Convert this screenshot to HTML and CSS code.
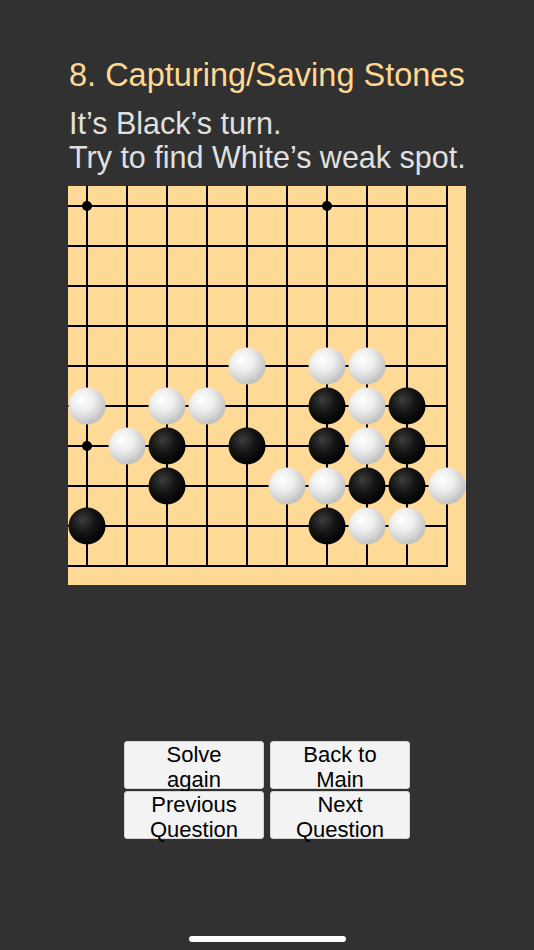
FILE: index.html
```html
<!DOCTYPE html>
<html lang="en">
<head>
<meta charset="utf-8">
<title>Capturing/Saving Stones</title>
<link rel="stylesheet" href="styles.css">
</head>
<body>
<div class="screen">
  <div class="content">
    <h1 class="title">8. Capturing/Saving Stones</h1>
    <p class="prompt">It’s Black’s turn.<br>Try to find White’s weak spot.</p>
    <svg class="board" width="398" height="399" viewBox="0 0 398 399" xmlns="http://www.w3.org/2000/svg">
      <defs>
        <radialGradient id="gw" cx="0.38" cy="0.34" r="0.7">
          <stop offset="0" stop-color="#ffffff"/>
          <stop offset="0.45" stop-color="#ececec"/>
          <stop offset="1" stop-color="#bdbdbd"/>
        </radialGradient>
        <radialGradient id="gb" cx="0.38" cy="0.34" r="0.7">
          <stop offset="0" stop-color="#3c3c3c"/>
          <stop offset="0.5" stop-color="#141414"/>
          <stop offset="1" stop-color="#000000"/>
        </radialGradient>
      </defs>
      <rect x="0" y="0" width="398" height="399" fill="#ffd996"/>
      <g stroke="#000" stroke-width="2">
        <line x1="19" y1="0" x2="19" y2="381"/>
        <line x1="59" y1="0" x2="59" y2="381"/>
        <line x1="99" y1="0" x2="99" y2="381"/>
        <line x1="139" y1="0" x2="139" y2="381"/>
        <line x1="179" y1="0" x2="179" y2="381"/>
        <line x1="219" y1="0" x2="219" y2="381"/>
        <line x1="259" y1="0" x2="259" y2="381"/>
        <line x1="299" y1="0" x2="299" y2="381"/>
        <line x1="339" y1="0" x2="339" y2="381"/>
        <line x1="379" y1="0" x2="379" y2="381"/>
        <line x1="0" y1="20" x2="380" y2="20"/>
        <line x1="0" y1="60" x2="380" y2="60"/>
        <line x1="0" y1="100" x2="380" y2="100"/>
        <line x1="0" y1="140" x2="380" y2="140"/>
        <line x1="0" y1="180" x2="380" y2="180"/>
        <line x1="0" y1="220" x2="380" y2="220"/>
        <line x1="0" y1="260" x2="380" y2="260"/>
        <line x1="0" y1="300" x2="380" y2="300"/>
        <line x1="0" y1="340" x2="380" y2="340"/>
        <line x1="0" y1="380" x2="380" y2="380"/>
      </g>
      <g fill="#000">
        <circle cx="19" cy="20" r="5"/>
        <circle cx="259" cy="20" r="5"/>
        <circle cx="19" cy="260" r="5"/>
      </g>
      <g fill="url(#gw)">
        <circle cx="179" cy="180" r="18.5"/>
        <circle cx="259" cy="180" r="18.5"/>
        <circle cx="299" cy="180" r="18.5"/>
        <circle cx="19" cy="220" r="18.5"/>
        <circle cx="99" cy="220" r="18.5"/>
        <circle cx="139" cy="220" r="18.5"/>
        <circle cx="299" cy="220" r="18.5"/>
        <circle cx="59" cy="260" r="18.5"/>
        <circle cx="299" cy="260" r="18.5"/>
        <circle cx="219" cy="300" r="18.5"/>
        <circle cx="259" cy="300" r="18.5"/>
        <circle cx="379" cy="300" r="18.5"/>
        <circle cx="299" cy="340" r="18.5"/>
        <circle cx="339" cy="340" r="18.5"/>
      </g>
      <g fill="url(#gb)">
        <circle cx="259" cy="220" r="18.5"/>
        <circle cx="339" cy="220" r="18.5"/>
        <circle cx="99" cy="260" r="18.5"/>
        <circle cx="179" cy="260" r="18.5"/>
        <circle cx="259" cy="260" r="18.5"/>
        <circle cx="339" cy="260" r="18.5"/>
        <circle cx="99" cy="300" r="18.5"/>
        <circle cx="299" cy="300" r="18.5"/>
        <circle cx="339" cy="300" r="18.5"/>
        <circle cx="19" cy="340" r="18.5"/>
        <circle cx="259" cy="340" r="18.5"/>
      </g>
    </svg>
  </div>
  <div class="actions">
    <button class="btn" type="button">Solve<br>again</button>
    <button class="btn" type="button">Back to<br>Main</button>
    <button class="btn" type="button">Previous<br>Question</button>
    <button class="btn" type="button">Next<br>Question</button>
  </div>
  <div class="home-indicator"></div>
</div>
</body>
</html>
```

FILE: styles.css
```css
html, body {
  margin: 0;
  padding: 0;
  background: #313131;
}

.screen {
  width: 534px;
  height: 950px;
  display: flex;
  flex-direction: column;
  align-items: center;
  font-family: "Liberation Sans", Arial, sans-serif;
}

.content {
  width: 398px;
  padding-top: 57px;
  display: flex;
  flex-direction: column;
}

.title {
  margin: 0 0 0 1px;
  font-size: 32.5px;
  line-height: 37px;
  font-weight: normal;
  color: #ffd891;
  white-space: nowrap;
}

.prompt {
  margin: 12px 0 0 1px;
  font-size: 30.5px;
  line-height: 34px;
  color: #e0e0e0;
  white-space: nowrap;
}

.board {
  display: block;
  margin-top: 12px;
}

.actions {
  margin-top: 156px;
  display: grid;
  grid-template-columns: 140px 140px;
  column-gap: 6px;
  row-gap: 2px;
}

.btn {
  height: 48px;
  margin: 0;
  padding: 0;
  border: 1px solid #d4d4d4;
  border-radius: 3px;
  background: #f3f3f3;
  color: #000;
  font-family: "Liberation Sans", Arial, sans-serif;
  font-size: 22px;
  line-height: 25px;
  text-align: center;
  display: flex;
  flex-direction: column;
  justify-content: flex-start;
  align-items: center;
  overflow: visible;
}

.home-indicator {
  margin-top: auto;
  margin-bottom: 8px;
  width: 157px;
  height: 6px;
  border-radius: 3px;
  background: #ffffff;
}
```
